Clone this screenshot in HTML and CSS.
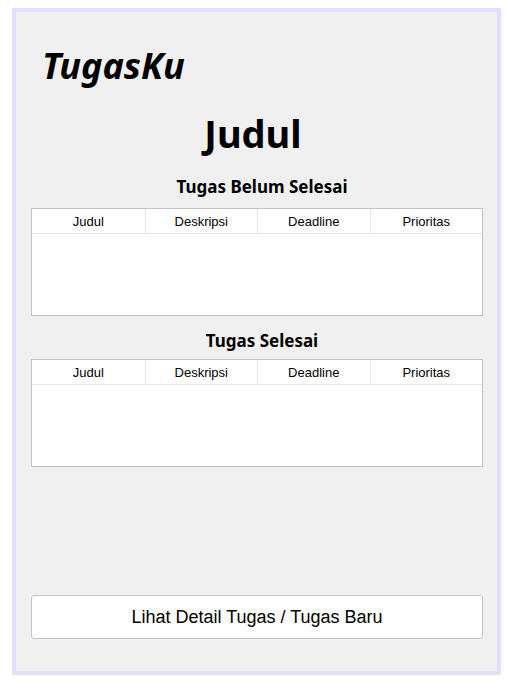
FILE: index.html
```html
<!DOCTYPE html>
<html lang="id">
<head>
  <meta charset="UTF-8">
  <meta name="viewport" content="width=device-width, initial-scale=1.0">
  <title>TugasKu</title>
  <link rel="stylesheet" href="styles.css">
</head>
<body>
  <div class="frame">
    <h1 class="app-title">TugasKu</h1>
    <h2 class="judul">Judul</h2>

    <h3 class="section-title">Tugas Belum Selesai</h3>
    <div class="tabel">
      <div class="tabel-head">
        <div>Judul</div>
        <div>Deskripsi</div>
        <div>Deadline</div>
        <div>Prioritas</div>
      </div>
      <div class="tabel-body"></div>
    </div>

    <h3 class="section-title kedua">Tugas Selesai</h3>
    <div class="tabel">
      <div class="tabel-head">
        <div>Judul</div>
        <div>Deskripsi</div>
        <div>Deadline</div>
        <div>Prioritas</div>
      </div>
      <div class="tabel-body"></div>
    </div>

    <div class="spacer"></div>
    <button class="tombol">Lihat Detail Tugas / Tugas Baru</button>
  </div>
</body>
</html>
```

FILE: styles.css
```css
body {
  margin: 0;
  padding: 8px 0 0 12px;
  background: #ffffff;
  font-family: "Liberation Sans", Arial, sans-serif;
}

.frame {
  box-sizing: border-box;
  width: 489px;
  height: 667px;
  border: 4px solid #e0e0fa;
  background: #f0f0f0;
  padding: 0 14px 32px 15px;
  display: flex;
  flex-direction: column;
}

.app-title {
  font-family: "Noto Sans", "Open Sans", sans-serif;
  font-style: italic;
  font-weight: bold;
  font-size: 36px;
  line-height: 40px;
  margin: 34px 0 0 11px;
  color: #000;
}

.judul {
  font-family: "Noto Sans", "Open Sans", sans-serif;
  font-weight: bold;
  font-size: 38px;
  line-height: 40px;
  text-align: center;
  margin: 27px 0 0 0;
  color: #000;
  padding-right: 8px;
}

.section-title {
  font-family: "Noto Sans", "Open Sans", sans-serif;
  font-weight: bold;
  font-size: 17px;
  line-height: 22px;
  text-align: center;
  margin: 23px 0 10px 0;
  padding-left: 10px;
  color: #000;
}

.section-title.kedua {
  margin-top: 14px;
  margin-bottom: 7px;
}

.tabel {
  border: 1px solid #c4c4c4;
  background: #fff;
  height: 108px;
  box-sizing: border-box;
}

.tabel-head {
  display: grid;
  grid-template-columns: repeat(4, 1fr);
  border-bottom: 1px solid #e4e4e4;
  height: 25px;
  box-sizing: border-box;
}

.tabel-head div {
  font-size: 13px;
  line-height: 22px;
  padding-top: 2px;
  text-align: center;
  color: #000;
  border-left: 1px solid #e4e4e4;
}

.tabel-head div:first-child {
  border-left: none;
}

.spacer {
  flex: 1;
}

.tombol {
  height: 44px;
  width: 100%;
  background: #fff;
  border: 1px solid #c4c4c4;
  border-radius: 3px;
  font-family: "Liberation Sans", Arial, sans-serif;
  font-size: 18px;
  color: #000;
  padding: 0;
}
```
